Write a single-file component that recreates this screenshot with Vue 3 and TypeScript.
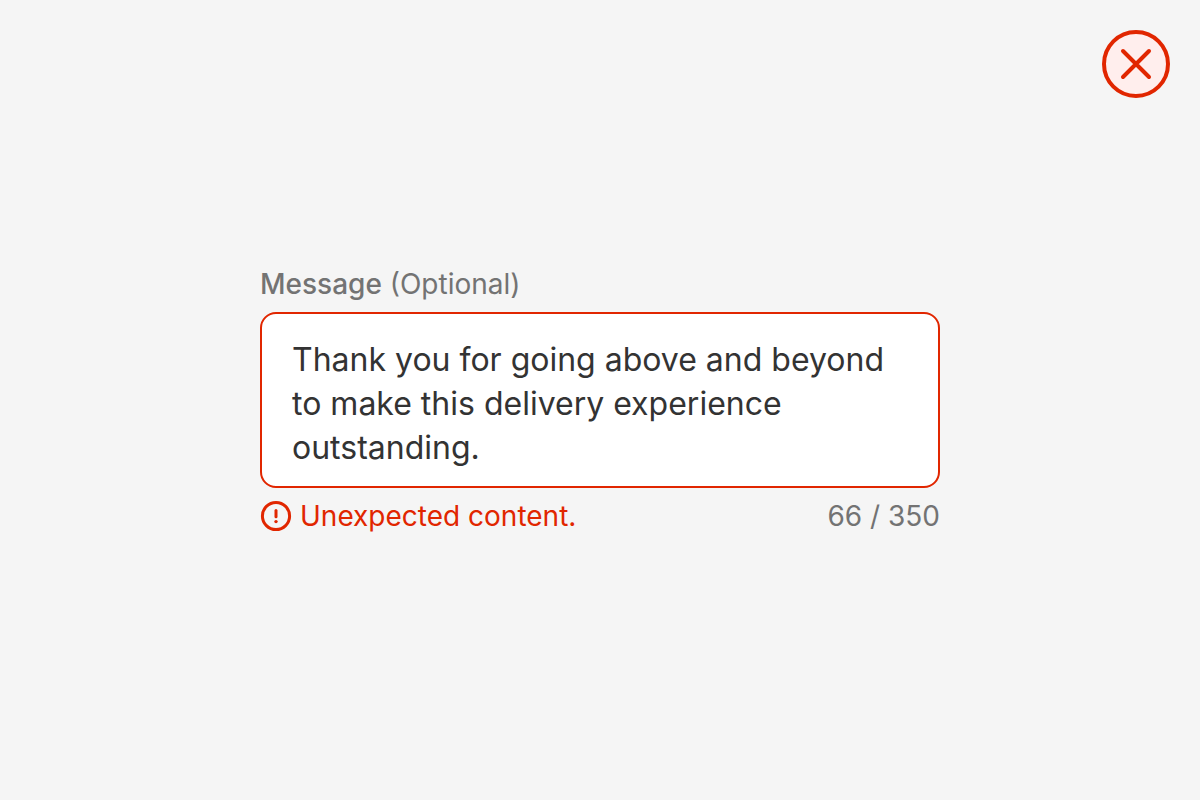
<script setup lang="ts">
import { ref } from 'vue'

const message = ref<string>(
  'Thank you for going above and beyond to make this delivery experience outstanding.',
)
const used = 66
const limit = 350
</script>

<template>
  <main class="page">
    <button class="close" type="button" aria-label="Close">
      <svg viewBox="0 0 68 68" aria-hidden="true">
        <circle cx="34" cy="34" r="32" />
        <path d="M21 21L47 47M47 21L21 47" />
      </svg>
    </button>

    <div class="field">
      <label class="label" for="message"><strong>Message</strong> (Optional)</label>
      <textarea
        id="message"
        v-model="message"
        class="input"
        rows="3"
        spellcheck="false"
        aria-invalid="true"
        aria-describedby="message-error message-count"
      ></textarea>
      <div class="meta">
        <p id="message-error" class="error">
          <svg class="alert" viewBox="0 0 32 32" aria-hidden="true">
            <circle class="ring" cx="16" cy="16" r="13.6" />
            <path class="bar" d="M16 10.5V16.7" />
            <circle class="dot" cx="16" cy="21.6" r="1.7" />
          </svg>
          <span>Unexpected content.</span>
        </p>
        <p id="message-count" class="count">{{ used }} / {{ limit }}</p>
      </div>
    </div>
  </main>
</template>

<style>
body {
  margin: 0;
  background: #f5f5f5;
}
</style>

<style scoped>
.page {
  position: relative;
  display: flex;
  align-items: center;
  justify-content: center;
  box-sizing: border-box;
  min-height: 100vh;
  padding: 24px;
  background: #f5f5f5;
  color: #737373;
  font-family: Inter, "Liberation Sans", sans-serif;
  font-size: 28px;
  line-height: 40px;
}

.close {
  position: absolute;
  top: 30px;
  right: 30px;
  width: 68px;
  height: 68px;
  padding: 0;
  border: 0;
  border-radius: 50%;
  background: none;
  cursor: pointer;
}

.close svg {
  display: block;
  width: 100%;
  fill: #ffeeed;
  stroke: #e12600;
  stroke-width: 4;
  stroke-linecap: round;
}

.field {
  display: flex;
  flex-direction: column;
  gap: 8px;
  width: 100%;
  max-width: 680px;
}

.label strong {
  font-weight: 500;
}

.input {
  display: block;
  box-sizing: border-box;
  width: 100%;
  margin: 0;
  padding: 24px 30px 16px;
  border: 2px solid #e12600;
  border-radius: 16px;
  outline: none;
  background: #fff;
  color: #333;
  font: inherit;
  font-size: 32px;
  line-height: 44px;
  resize: none;
  overflow: hidden;
}

.meta {
  display: flex;
  justify-content: space-between;
  gap: 16px;
}

.meta p {
  margin: 0;
}

.error {
  display: flex;
  align-items: center;
  gap: 8px;
  color: #e12600;
}

.alert {
  flex: none;
  width: 32px;
  height: 32px;
  fill: none;
  stroke: #e12600;
  stroke-linecap: round;
}

.ring {
  stroke-width: 3;
}

.bar {
  stroke-width: 3;
}

.dot {
  fill: #e12600;
  stroke: none;
}

.count {
  white-space: nowrap;
}
</style>
